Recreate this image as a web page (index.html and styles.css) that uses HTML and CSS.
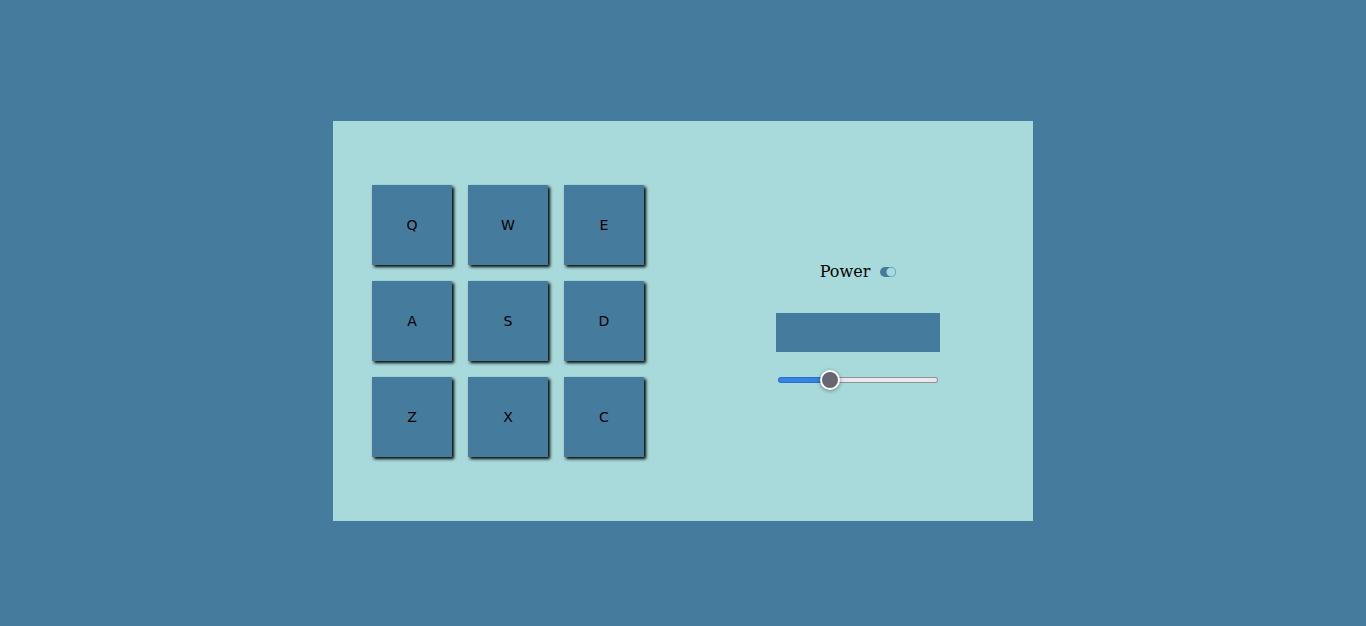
FILE: index.html
```html
<!DOCTYPE html>
<html lang="en">
<head>
<meta charset="utf-8">
<meta name="viewport" content="width=device-width, initial-scale=1">
<title>Drum Machine</title>
<link rel="stylesheet" href="styles.css">
</head>
<body>
<main class="machine">
  <div class="pads">
    <button class="pad" type="button">Q</button>
    <button class="pad" type="button">W</button>
    <button class="pad" type="button">E</button>
    <button class="pad" type="button">A</button>
    <button class="pad" type="button">S</button>
    <button class="pad" type="button">D</button>
    <button class="pad" type="button">Z</button>
    <button class="pad" type="button">X</button>
    <button class="pad" type="button">C</button>
  </div>
  <div class="controls">
    <label class="power">Power <input class="toggle" type="checkbox" role="switch" checked></label>
    <output class="display"></output>
    <input class="volume" type="range" min="0" max="1" step="0.01" value="0.3" aria-label="Volume">
  </div>
</main>
</body>
</html>
```

FILE: styles.css
```css
* {
  box-sizing: border-box;
}

body {
  margin: 0;
  min-height: 100vh;
  padding-top: 16px;
  display: flex;
  align-items: center;
  justify-content: center;
  background: #457b9d;
  color: #000;
  font: 16px "DejaVu Serif", serif;
}

.machine {
  display: grid;
  grid-template-columns: 1fr 1fr;
  align-items: center;
  justify-items: center;
  width: 100%;
  max-width: 700px;
  padding: 64px 0;
  background: #a8dadc;
}

.pads {
  display: grid;
  grid-template-columns: repeat(3, 80px);
  grid-auto-rows: 80px;
  gap: 16px;
}

.pad {
  padding: 0;
  border: 0;
  background: #457b9d;
  box-shadow: 2px 2px 3px #000;
  color: #000;
  font: 14px "DejaVu Sans", sans-serif;
  cursor: pointer;
}

.controls {
  display: flex;
  flex-direction: column;
  align-items: center;
  padding-top: 10px;
}

.power {
  display: flex;
  align-items: center;
  gap: 10px;
  margin-bottom: 32px;
}

.toggle {
  appearance: none;
  width: 16px;
  height: 10px;
  margin: 0;
  border-radius: 5px;
  background: radial-gradient(circle at 11px 5px, #a8dadc 4px, #457b9d 5px);
}

.display {
  width: 164px;
  height: 39px;
  margin-bottom: 18px;
  background: #457b9d;
}

.volume {
  appearance: none;
  width: 160px;
  height: 20px;
  margin: 0;
  background: transparent;
}

.volume::-webkit-slider-runnable-track {
  height: 6px;
  border: 1px solid transparent;
  border-radius: 3px;
  background:
    linear-gradient(to right, #3584e4 32%, #e9e9ed 32%) padding-box,
    linear-gradient(to right, #2a6fc9 32%, #8f8f9d 32%) border-box;
}

.volume::-webkit-slider-thumb {
  appearance: none;
  width: 20px;
  height: 20px;
  margin-top: -8px;
  border: 2px solid #fff;
  border-radius: 50%;
  background: #676774;
  box-shadow: 0 1px 4px rgba(0, 0, 0, 0.4);
}
```
